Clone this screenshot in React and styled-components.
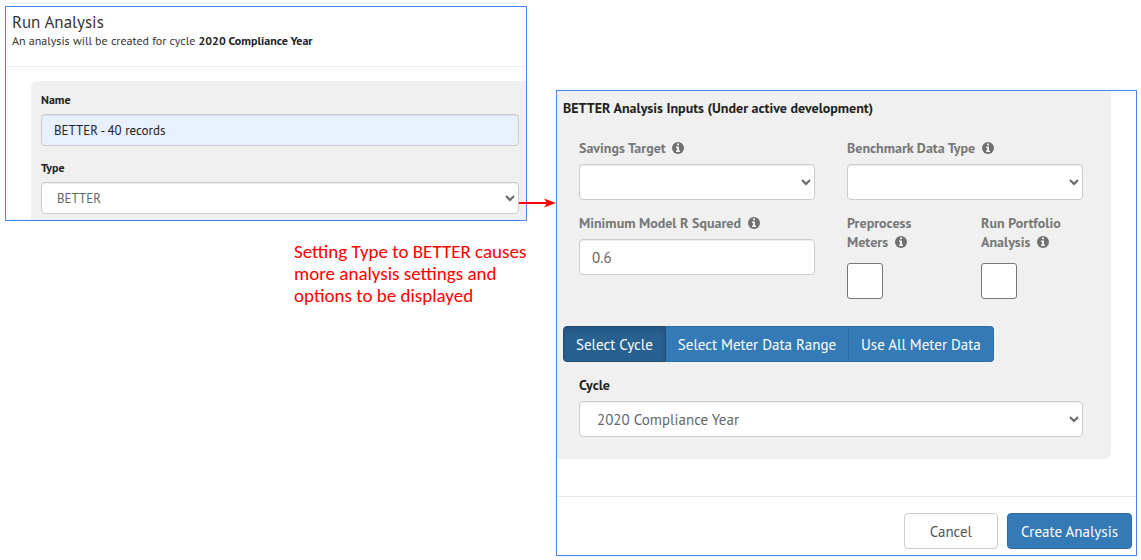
import React, { useState } from "react";
import styled, { createGlobalStyle, css } from "styled-components";

const GlobalStyle = createGlobalStyle`
  * { box-sizing: border-box; }
  body {
    margin: 0;
    background: #fff;
    color: #333;
    font-family: "PT Sans", "Noto Sans", sans-serif;
  }
  button, input, select { font-family: inherit; }
`;

const Page = styled.main`
  display: grid;
  grid-template-columns: 522fr 581fr;
  column-gap: 29px;
  align-items: start;
  padding: 6px 4px 4px 5px;
`;

const LeftColumn = styled.div`
  position: relative;
`;

const Panel = styled.section`
  border: 1px solid #4a86e8;
  background: #fff;
`;

const ResultPanel = styled(Panel)`
  margin-top: 84px;
`;

const PanelHeader = styled.header`
  padding: 4px 6px 17px;
  border-bottom: 1px solid #eee;
`;

const Title = styled.h1`
  margin: 0;
  font-size: 17px;
  line-height: 22px;
  font-weight: 400;
`;

const Subtitle = styled.p`
  margin: 0;
  font-size: 12px;
  line-height: 16px;

  strong { color: #222; }
`;

const BasicsWell = styled.div`
  margin: 14px 0 0 25px;
  padding: 11px 7px 6px 10px;
  border-radius: 6px 0 0 0;
  background: #f0f0f0;
`;

const Field = styled.div`
  & + & { margin-top: 14px; }
`;

const Label = styled.label`
  display: block;
  margin-bottom: ${(p) => (p.$small ? 6 : 7)}px;
  color: ${(p) => (p.$muted ? "#777" : "#222")};
  font-size: ${(p) => (p.$small ? 12 : 14)}px;
  line-height: ${(p) => (p.$small ? 16 : 18)}px;
  font-weight: 700;
`;

const control = css`
  display: block;
  width: 100%;
  height: ${(p) => (p.$small ? 32 : 36)}px;
  margin: 0;
  padding: 0 12px;
  border: 1px solid #ccc;
  border-radius: 4px;
  background-color: #fff;
  box-shadow: inset 0 1px 1px rgba(0, 0, 0, 0.075);
  color: #666;
  font-size: ${(p) => (p.$small ? 13 : 15)}px;
`;

const TextInput = styled.input`
  ${control}
  ${(p) => p.$autofilled && css`
    background-color: #e8f0fe;
    color: #222;
  `}
`;

const Select = styled.select`
  ${control}
  padding: ${(p) => (p.$small ? "0 1px 0 11px" : "0 2px 0 13px")};
`;

const Note = styled.p`
  margin: 20px 0 0 289px;
  color: #f00;
  font-family: Carlito, Lato, sans-serif;
  font-size: 19px;
  line-height: 22px;
`;

const Arrow = styled.svg`
  position: absolute;
  top: 191px;
  right: -29px;
  width: 37px;
  height: 12px;
`;

const InputsWell = styled.div`
  margin-right: 25px;
  padding: 8px 28px 22px 6px;
  border-radius: 0 0 6px 0;
  background: #f0f0f0;
`;

const WellHeading = styled.h2`
  margin: 0;
  color: #222;
  font-size: 14px;
  line-height: 18px;
  font-weight: 700;
`;

const FieldGrid = styled.div`
  display: grid;
  grid-template-columns: 1fr 1fr;
  gap: 14px 32px;
  margin: 22px 0 27px 16px;
`;

const CheckPair = styled.div`
  display: grid;
  grid-template-columns: 1fr 1fr;
  column-gap: 32px;
`;

const CheckLabel = styled(Label)`
  margin-bottom: 11px;
  line-height: 19px;
`;

const Checkbox = styled.input`
  display: block;
  appearance: none;
  width: 36px;
  height: 36px;
  margin: 0;
  border: 1px solid #767676;
  border-radius: 3px;
  background: #fff;

  &:checked {
    background: #337ab7;
    box-shadow: inset 0 0 0 6px #fff;
  }
`;

const InfoSvg = styled.svg`
  width: 12px;
  height: 12px;
  margin-left: 3px;
  vertical-align: -1px;
`;

const ButtonGroup = styled.div`
  display: flex;
`;

const RangeButton = styled.button`
  height: 36px;
  padding: 0 12px;
  border: 1px solid ${(p) => (p.$active ? "#204d74" : "#2e6da4")};
  border-left-width: ${(p) => (p.$first ? 1 : 0)}px;
  background: ${(p) => (p.$active ? "#286090" : "#337ab7")};
  box-shadow: ${(p) => (p.$active ? "inset 0 3px 5px rgba(0, 0, 0, 0.125)" : "none")};
  color: #fff;
  font-size: 15px;
  white-space: nowrap;

  &:first-child { border-radius: 4px 0 0 4px; }
  &:last-child { border-radius: 0 4px 4px 0; }
`;

const CycleField = styled.div`
  margin: 14px 0 0 16px;
`;

const PanelFooter = styled.footer`
  display: flex;
  justify-content: flex-end;
  gap: 9px;
  margin-top: 37px;
  padding: 16px 4px 6px;
  border-top: 1px solid #e8e8e8;
`;

const ActionButton = styled.button`
  height: 36px;
  padding: 0 ${(p) => (p.$primary ? 13 : 25)}px;
  border: 1px solid ${(p) => (p.$primary ? "#2e6da4" : "#ccc")};
  border-radius: 4px;
  background: ${(p) => (p.$primary ? "#337ab7" : "#fff")};
  color: ${(p) => (p.$primary ? "#fff" : "#555")};
  font-size: 15px;
  white-space: nowrap;
`;

function InfoIcon() {
  return (
    <InfoSvg viewBox="0 0 12 12" aria-hidden="true">
      <circle cx="6" cy="6" r="6" fill="#707070" />
      <path d="M5 1.500h2v1.800H5zM4 4.500H7v4h1V10H4V8.500H5V6H4z" fill="#f0f0f0" />
    </InfoSvg>
  );
}

const RANGES = ["Select Cycle", "Select Meter Data Range", "Use All Meter Data"];

export default function App() {
  const [range, setRange] = useState(RANGES[0]);

  return (
    <>
      <GlobalStyle />
      <Page>
        <LeftColumn>
          <Panel>
            <PanelHeader>
              <Title>Run Analysis</Title>
              <Subtitle>
                An analysis will be created for cycle <strong>2020 Compliance Year</strong>
              </Subtitle>
            </PanelHeader>
            <BasicsWell>
              <Field>
                <Label $small htmlFor="name">Name</Label>
                <TextInput $small $autofilled id="name" defaultValue="BETTER - 40 records" />
              </Field>
              <Field>
                <Label $small htmlFor="type">Type</Label>
                <Select $small id="type">
                  <option>BETTER</option>
                </Select>
              </Field>
            </BasicsWell>
          </Panel>
          <Arrow viewBox="0 0 37 12" aria-hidden="true">
            <path d="M0 6h30" stroke="#f00" strokeWidth="2" />
            <path d="M25 1.500L37 6L25 10.500L28 6z" fill="#f00" />
          </Arrow>
          <Note>
            Setting Type to BETTER causes
            <br />
            more analysis settings and
            <br />
            options to be displayed
          </Note>
        </LeftColumn>

        <ResultPanel>
          <InputsWell>
            <WellHeading>BETTER Analysis Inputs (Under active development)</WellHeading>
            <FieldGrid>
              <div>
                <Label $muted htmlFor="target">Savings Target <InfoIcon /></Label>
                <Select id="target"><option /></Select>
              </div>
              <div>
                <Label $muted htmlFor="benchmark">Benchmark Data Type <InfoIcon /></Label>
                <Select id="benchmark"><option /></Select>
              </div>
              <div>
                <Label $muted htmlFor="rsquared">Minimum Model R Squared <InfoIcon /></Label>
                <TextInput id="rsquared" defaultValue="0.6" />
              </div>
              <CheckPair>
                <div>
                  <CheckLabel $muted htmlFor="preprocess">
                    Preprocess<br />Meters <InfoIcon />
                  </CheckLabel>
                  <Checkbox type="checkbox" id="preprocess" />
                </div>
                <div>
                  <CheckLabel $muted htmlFor="portfolio">
                    Run Portfolio<br />Analysis <InfoIcon />
                  </CheckLabel>
                  <Checkbox type="checkbox" id="portfolio" />
                </div>
              </CheckPair>
            </FieldGrid>
            <ButtonGroup>
              {RANGES.map((name, i) => (
                <RangeButton
                  key={name}
                  type="button"
                  $first={i === 0}
                  $active={name === range}
                  aria-pressed={name === range}
                  onClick={() => setRange(name)}
                >
                  {name}
                </RangeButton>
              ))}
            </ButtonGroup>
            <CycleField>
              <Label htmlFor="cycle">Cycle</Label>
              <Select id="cycle"><option>2020 Compliance Year</option></Select>
            </CycleField>
          </InputsWell>
          <PanelFooter>
            <ActionButton type="button">Cancel</ActionButton>
            <ActionButton type="button" $primary>Create Analysis</ActionButton>
          </PanelFooter>
        </ResultPanel>
      </Page>
    </>
  );
}
